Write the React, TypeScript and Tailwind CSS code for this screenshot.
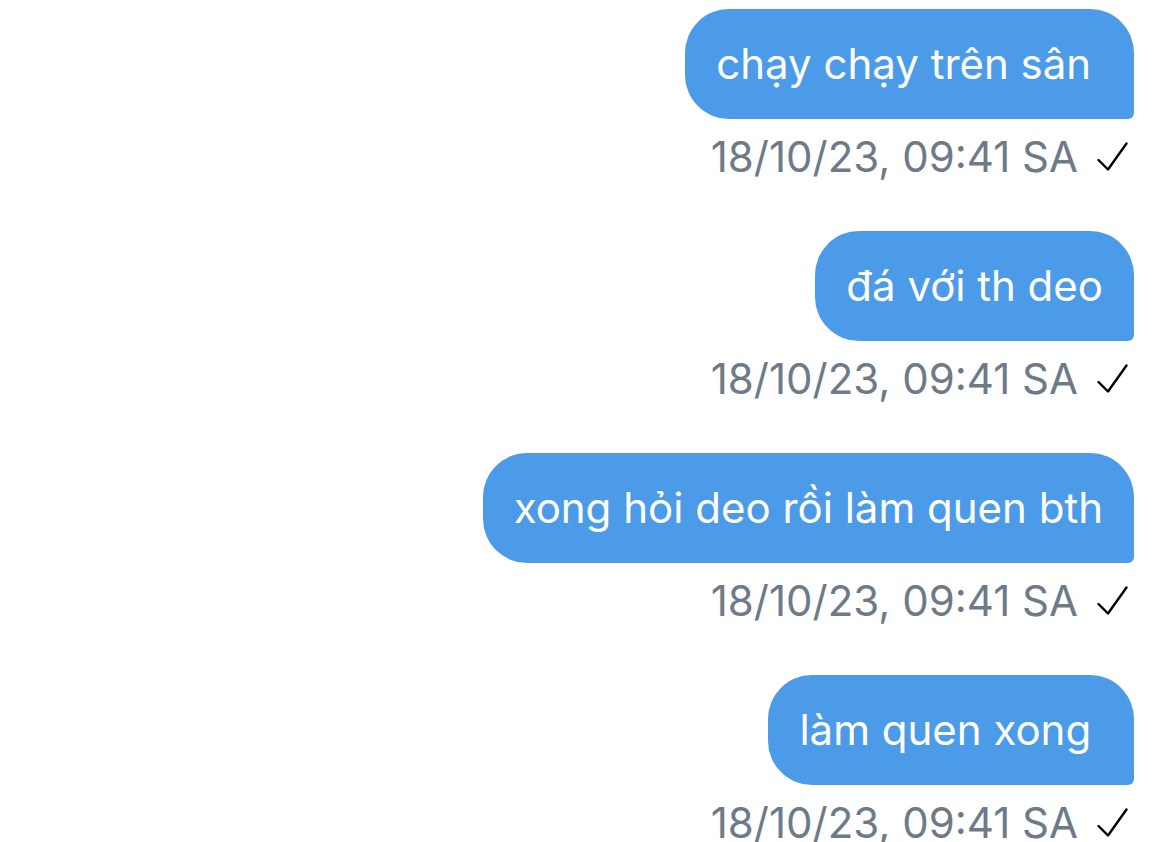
const messages = [
  { text: "chạy chạy trên sân ", time: "18/10/23, 09:41 SA" },
  { text: "đá với th deo", time: "18/10/23, 09:41 SA" },
  { text: "xong hỏi deo rồi làm quen bth", time: "18/10/23, 09:41 SA" },
  { text: "làm quen xong ", time: "18/10/23, 09:41 SA" },
];

function Check() {
  return (
    <svg width="31" height="30" viewBox="0 0 31 30" fill="none">
      <path
        d="M1.5 18 L11 27.5 L29.5 1.5"
        stroke="#000"
        strokeWidth="2.4"
        strokeLinecap="round"
        strokeLinejoin="round"
      />
    </svg>
  );
}

export default function App() {
  return (
    <div className="min-h-screen bg-white pt-[9px] pr-[36px] flex flex-col items-end font-['Inter',sans-serif]">
      {messages.map((m, i) => (
        <div key={i} className="flex flex-col items-end mb-[51px]">
          <div className="bg-[#4c9be8] text-white text-[42px] leading-[46px] px-[31px] py-[32px] rounded-[44px] rounded-br-[6px] whitespace-pre">
            {m.text}
          </div>
          <div className="flex items-center gap-[19px] pr-[6px] mt-[15px] text-[#6e7a88] text-[42px] leading-[46px]">
            <span>{m.time}</span>
            <Check />
          </div>
        </div>
      ))}
    </div>
  );
}
